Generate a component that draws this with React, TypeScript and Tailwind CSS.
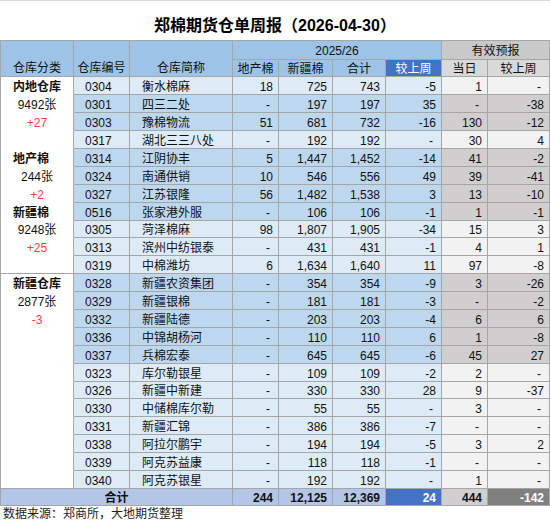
import React from "react";

type R = [string, string, string, string, string, string, string, string, boolean];

const rows: R[] = [
  ["0304", "衡水棉麻", "18", "725", "743", "-5", "1", "-", false],
  ["0301", "四三二处", "-", "197", "197", "35", "-", "-38", true],
  ["0303", "豫棉物流", "51", "681", "732", "-16", "130", "-12", true],
  ["0317", "湖北三三八处", "-", "192", "192", "-", "30", "4", false],
  ["0314", "江阴协丰", "5", "1,447", "1,452", "-14", "41", "-2", true],
  ["0324", "南通供销", "10", "546", "556", "49", "39", "-41", true],
  ["0327", "江苏银隆", "56", "1,482", "1,538", "3", "13", "-10", true],
  ["0516", "张家港外服", "-", "106", "106", "-1", "1", "-1", true],
  ["0305", "菏泽棉麻", "98", "1,807", "1,905", "-34", "15", "3", false],
  ["0313", "滨州中纺银泰", "-", "431", "431", "-1", "4", "1", false],
  ["0319", "中棉潍坊", "6", "1,634", "1,640", "11", "97", "-8", false],
  ["0328", "新疆农资集团", "-", "354", "354", "-9", "3", "-26", true],
  ["0329", "新疆银棉", "-", "181", "181", "-3", "-", "-2", true],
  ["0332", "新疆陆德", "-", "203", "203", "-4", "6", "6", true],
  ["0336", "中锦胡杨河", "-", "110", "110", "6", "1", "-8", true],
  ["0337", "兵棉宏泰", "-", "645", "645", "-6", "45", "27", true],
  ["0323", "库尔勒银星", "-", "109", "109", "-2", "2", "-", false],
  ["0326", "新疆中新建", "-", "330", "330", "28", "9", "-37", false],
  ["0330", "中储棉库尔勒", "-", "55", "55", "-", "3", "-", false],
  ["0331", "新疆汇锦", "-", "386", "386", "-7", "-", "-", false],
  ["0338", "阿拉尔鹏宇", "-", "194", "194", "-5", "3", "2", false],
  ["0339", "阿克苏益康", "-", "118", "118", "-1", "-", "-", false],
  ["0340", "阿克苏银星", "-", "192", "192", "-", "1", "-", false],
];

type Cat = { t: string; k: "b" | "bl" | "n" | "r" };
const cats: Record<number, Cat> = {
  0: { t: "内地仓库", k: "b" },
  1: { t: "9492张", k: "n" },
  2: { t: "+27", k: "r" },
  4: { t: "地产棉", k: "bl" },
  5: { t: "244张", k: "n" },
  6: { t: "+2", k: "r" },
  7: { t: "新疆棉", k: "bl" },
  8: { t: "9248张", k: "n" },
  9: { t: "+25", k: "r" },
  11: { t: "新疆仓库", k: "b" },
  12: { t: "2877张", k: "n" },
  13: { t: "-3", k: "r" },
};

const B = "border-r border-b border-[#a6a6a6] flex items-end leading-[12px] text-[12px] pb-[1px]";

function Num({ v, bg, extra = "" }: { v: string; bg: string; extra?: string }) {
  const pad = v === "-" ? "pr-[8px]" : "pr-[5px]";
  return <div className={`${B} justify-end ${pad} ${bg} ${extra}`}>{v}</div>;
}

export default function App() {
  return (
    <div className="w-[550px] h-[522px] bg-white text-[#111] font-['Liberation_Sans','Noto_Sans_CJK_SC',sans-serif]">
      <div className="h-[40px] border-t border-[#d9d9d9] flex items-end justify-center pb-[4px]">
        <div className="text-[16px] leading-[20px] font-bold text-black">郑棉期货仓单周报（2026-04-30）</div>
      </div>
      <div className="grid grid-cols-[73px_56px_103px_46px_54px_53px_56px_46px_62px] grid-rows-[19px_17.4px_repeat(23,17.9px)_16.7px] border-l border-t border-[#a6a6a6] w-[550px]">
        <div className={`${B} row-span-2 justify-center bg-[#9dc3e6] pb-[2px]`}>仓库分类</div>
        <div className={`${B} row-span-2 justify-center bg-[#9dc3e6] pb-[2px]`}>仓库编号</div>
        <div className={`${B} row-span-2 justify-center bg-[#9dc3e6] pb-[2px]`}>仓库简称</div>
        <div className={`${B} col-span-4 justify-center bg-[#9dc3e6] pb-[2px]`}>2025/26</div>
        <div className={`${B} col-span-2 justify-center bg-[#c9c9c9] pb-[2px]`}>有效预报</div>
        <div className={`${B} justify-center bg-[#9dc3e6]`}>地产棉</div>
        <div className={`${B} justify-center bg-[#9dc3e6]`}>新疆棉</div>
        <div className={`${B} justify-center bg-[#9dc3e6]`}>合计</div>
        <div className={`${B} justify-center bg-[#4472c4] text-white`}>较上周</div>
        <div className={`${B} justify-center bg-[#d9d9d9]`}>当日</div>
        <div className={`${B} justify-center bg-[#d9d9d9]`}>较上周</div>
        {rows.map((r, i) => {
          const c = cats[i];
          const end = i === 10 || i === 22;
          const blue = r[8] ? "bg-[#bdd7ee]" : "bg-[#ddebf7]";
          const gray = r[8] ? "bg-[#d0cece]" : "bg-[#f2f2f2]";
          let catCls = "justify-center";
          if (c?.k === "bl") catCls = "justify-start pl-[12px] font-bold";
          if (c?.k === "b") catCls = "justify-center font-bold";
          if (c?.k === "r") catCls = "justify-center text-[#ff3b3b]";
          return (
            <React.Fragment key={r[0]}>
              <div
                className={`border-r border-b ${end ? "border-[#a6a6a6]" : "border-r-[#a6a6a6] border-b-white"} flex items-end leading-[12px] text-[12px] pb-[1px] bg-white ${catCls}`}
              >
                {c?.t ?? ""}
              </div>
              <div className={`${B} pl-[11px] ${blue}`}>{r[0]}</div>
              <div className={`${B} pl-[12px] ${blue}`}>{r[1]}</div>
              <Num v={r[2]} bg={blue} />
              <Num v={r[3]} bg={blue} />
              <Num v={r[4]} bg={blue} />
              <Num v={r[5]} bg={blue} />
              <Num v={r[6]} bg={gray} />
              <Num v={r[7]} bg={gray} />
            </React.Fragment>
          );
        })}
        <div className={`${B} col-span-3 justify-center bg-[#b4c6e7] font-bold`}>合计</div>
        <Num v="244" bg="bg-[#b4c6e7]" extra="font-bold" />
        <Num v="12,125" bg="bg-[#b4c6e7]" extra="font-bold" />
        <Num v="12,369" bg="bg-[#b4c6e7]" extra="font-bold" />
        <Num v="24" bg="bg-[#4472c4]" extra="font-bold text-white" />
        <Num v="444" bg="bg-[#d0cece]" extra="font-bold" />
        <Num v="-142" bg="bg-[#808080]" extra="font-bold text-white" />
      </div>
      <div className="h-[17px] pl-[3px] flex items-center text-[12px] leading-[14px] text-[#222]">
        数据来源：郑商所，大地期货整理
      </div>
    </div>
  );
}
